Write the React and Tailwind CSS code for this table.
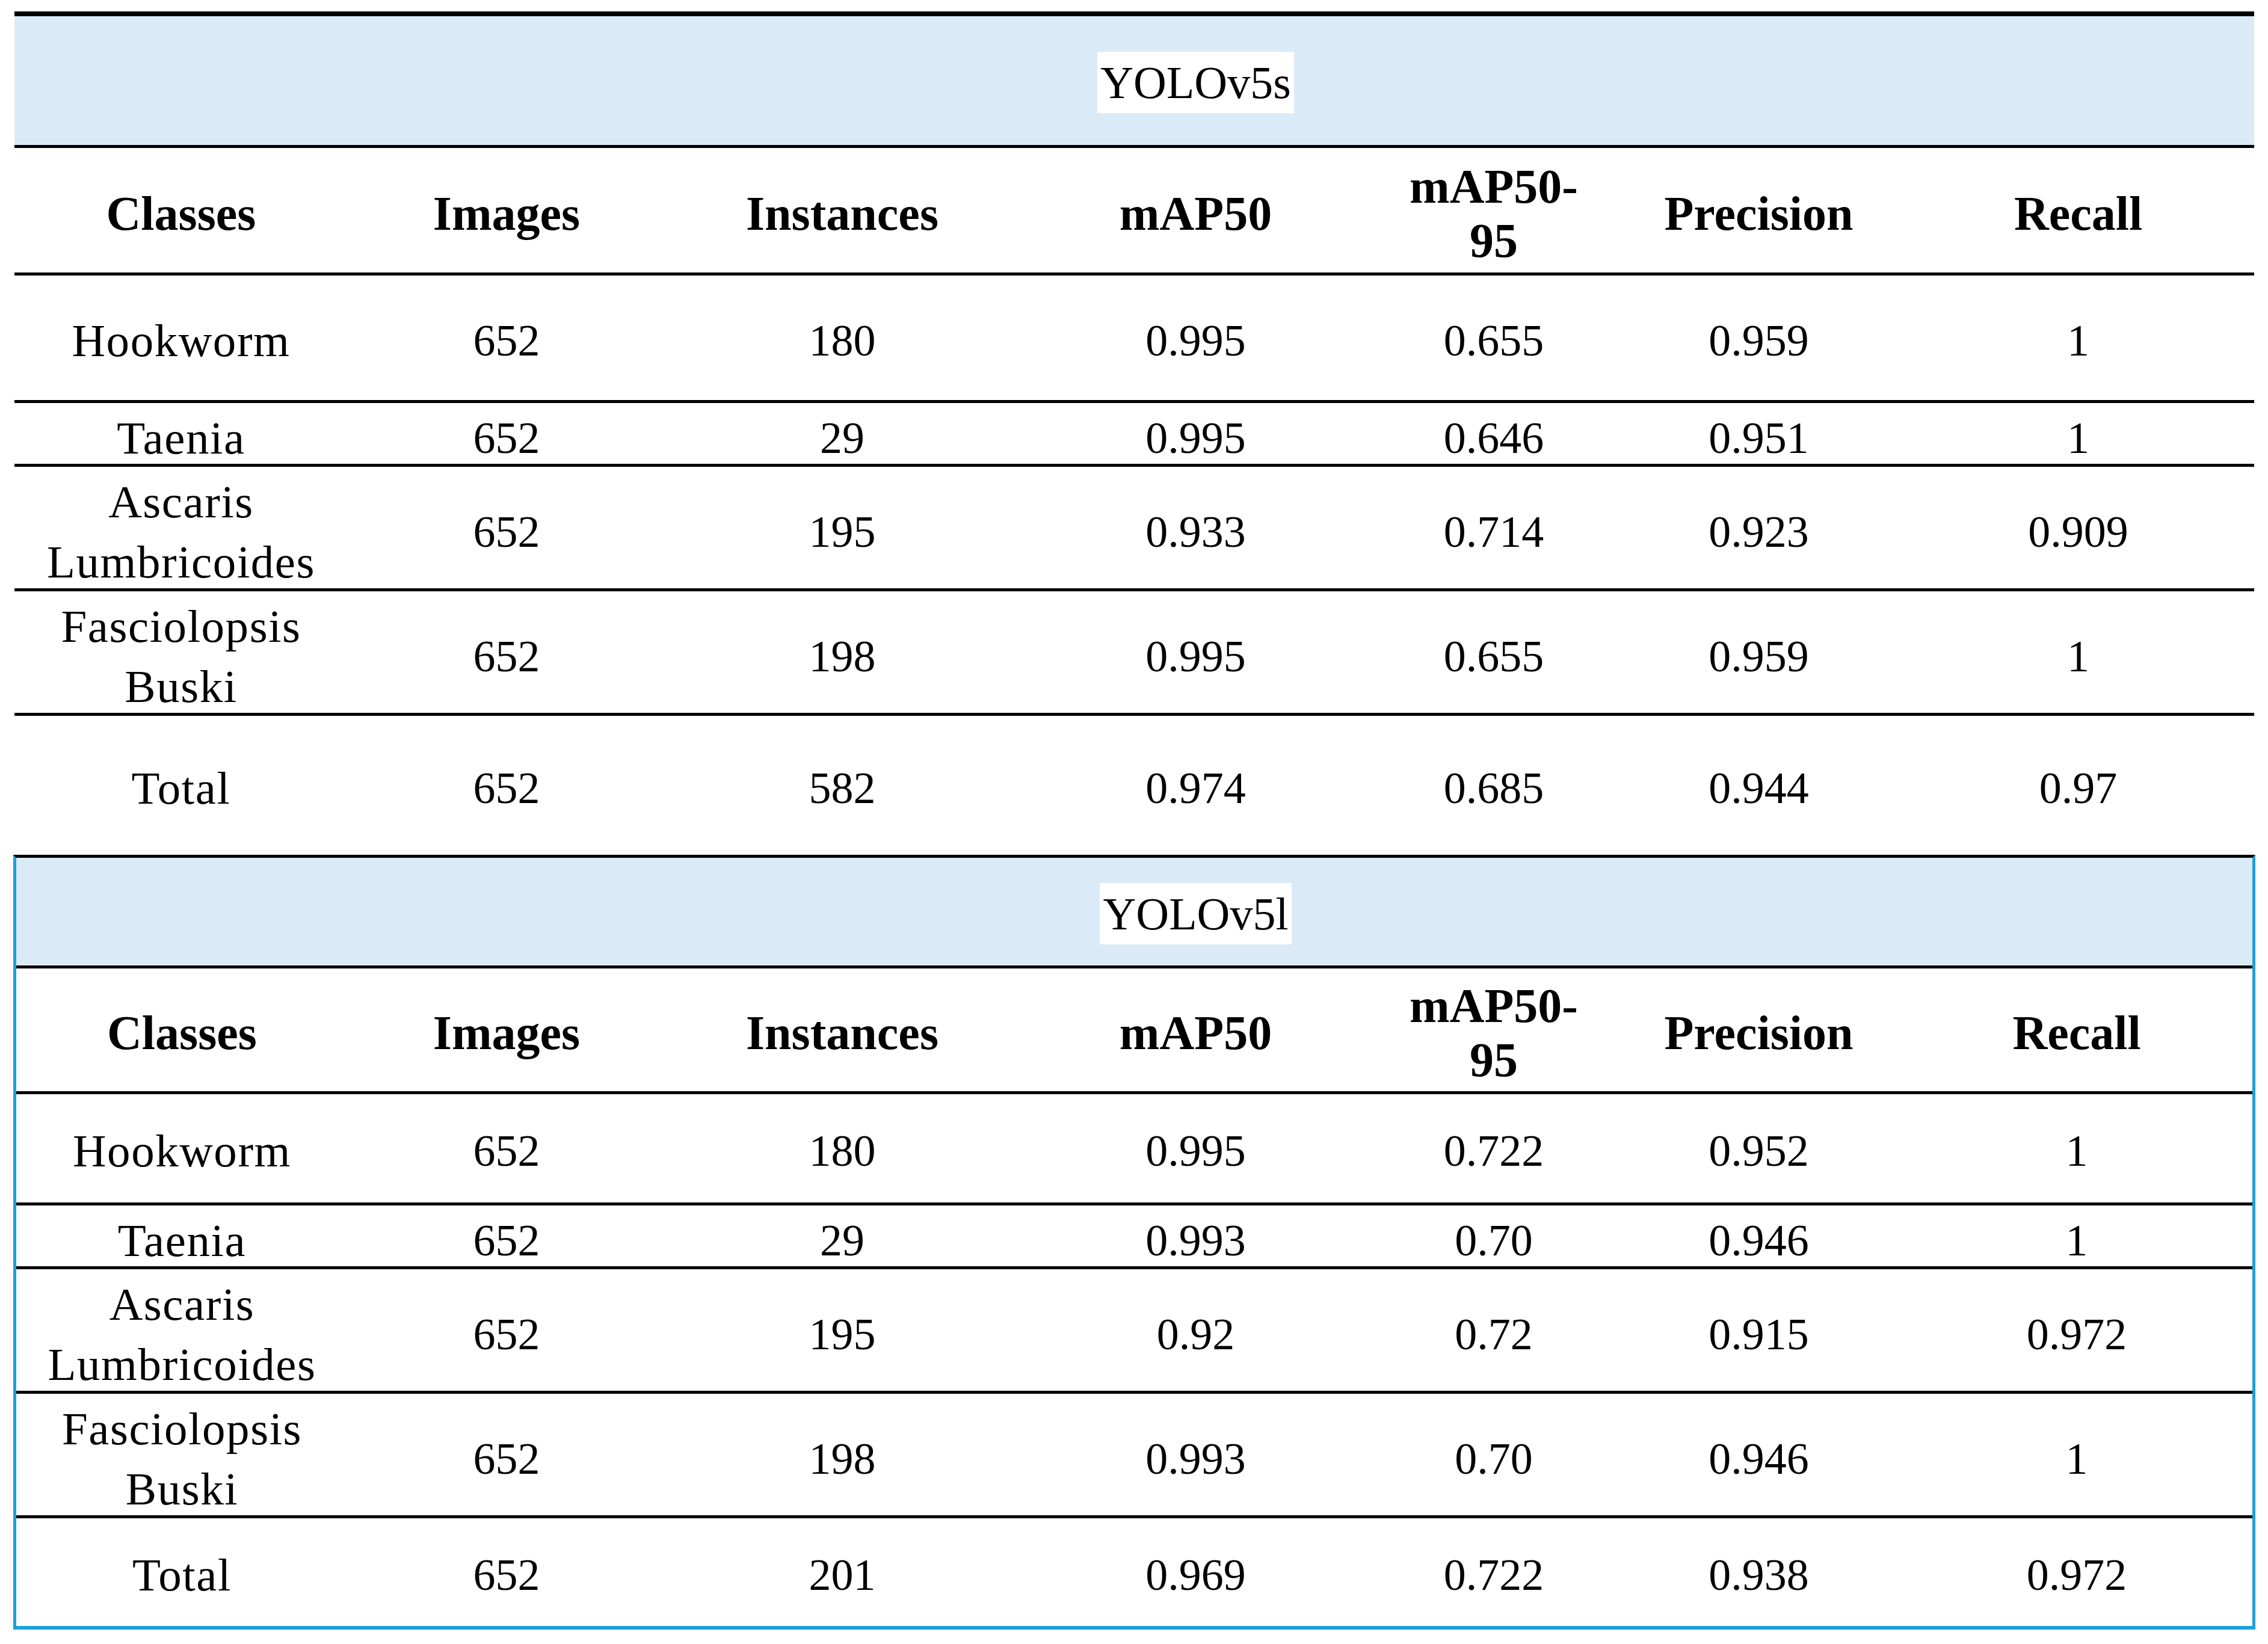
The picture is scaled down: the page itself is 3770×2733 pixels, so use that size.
import React from "react";

const serif = "font-['Liberation_Serif','Times_New_Roman',serif]";

const tables = [
  {
    label: "YOLOv5s",
    wrap: "ml-[24px] mt-[19px] w-[3723px] border-t-[8px] border-black",
    cols: "grid-cols-[554px_528px_588px_587px_404px_477px_585px]",
    band: "h-[219px]",
    head: "h-[212px]",
    rows: [
      { h: "h-[212px]", name: ["Hookworm"], v: ["652", "180", "0.995", "0.655", "0.959", "1"] },
      { h: "h-[106px]", name: ["Taenia"], v: ["652", "29", "0.995", "0.646", "0.951", "1"] },
      { h: "h-[207px]", name: ["Ascaris", "Lumbricoides"], v: ["652", "195", "0.933", "0.714", "0.923", "0.909"] },
      { h: "h-[207px]", name: ["Fasciolopsis", "Buski"], v: ["652", "198", "0.995", "0.655", "0.959", "1"] },
      { h: "h-[231px]", name: ["Total"], v: ["652", "582", "0.974", "0.685", "0.944", "0.97"], last: true },
    ],
  },
  {
    label: "YOLOv5l",
    wrap: "ml-[22px] w-[3727px] border-t-[5px] border-t-black border-x-[5px] border-x-[#1e9fdb] border-b-[6px] border-b-[#1e9fdb]",
    cols: "grid-cols-[551px_528px_588px_587px_404px_477px_580px]",
    band: "h-[184px]",
    head: "h-[209px]",
    rows: [
      { h: "h-[185px]", name: ["Hookworm"], v: ["652", "180", "0.995", "0.722", "0.952", "1"] },
      { h: "h-[106px]", name: ["Taenia"], v: ["652", "29", "0.993", "0.70", "0.946", "1"] },
      { h: "h-[207px]", name: ["Ascaris", "Lumbricoides"], v: ["652", "195", "0.92", "0.72", "0.915", "0.972"] },
      { h: "h-[207px]", name: ["Fasciolopsis", "Buski"], v: ["652", "198", "0.993", "0.70", "0.946", "1"] },
      { h: "h-[179px]", name: ["Total"], v: ["652", "201", "0.969", "0.722", "0.938", "0.972"], last: true },
    ],
  },
];

function ResultTable({ t }) {
  return (
    <div className={t.wrap}>
      {/* model name band */}
      <div className={`grid ${t.cols} ${t.band} items-center border-b-[5px] border-black bg-[#daebf7] pt-[6px]`}>
        <div className="col-start-4 justify-self-center">
          <span className="inline-block bg-white px-[5px] text-[76px] leading-[102px] text-black">
            {t.label}
          </span>
        </div>
      </div>

      {/* column headers */}
      <div className={`grid ${t.cols} ${t.head} items-center border-b-[5px] border-black pt-[10px] text-center text-[80px] font-bold text-black`}>
        <div>Classes</div>
        <div>Images</div>
        <div>Instances</div>
        <div>mAP50</div>
        <div className="leading-[90px]">
          mAP50-
          <br />
          95
        </div>
        <div>Precision</div>
        <div>Recall</div>
      </div>

      {t.rows.map((r, i) => (
        <div
          key={i}
          className={`grid ${t.cols} ${r.h} items-center pt-[8px] text-center text-black ${
            r.last ? "" : "border-b-[5px] border-black"
          }`}
        >
          <div className="text-[77px] leading-[100px] tracking-[0.02em]">
            {r.name.map((n, j) => (
              <div key={j}>{n}</div>
            ))}
          </div>
          {r.v.map((v, j) => (
            <div key={j} className="text-[74px] leading-[100px]">
              {v}
            </div>
          ))}
        </div>
      ))}
    </div>
  );
}

export default function App() {
  return (
    <div className={`min-h-[2733px] w-[3770px] bg-white ${serif}`}>
      {tables.map((t) => (
        <ResultTable key={t.label} t={t} />
      ))}
    </div>
  );
}
